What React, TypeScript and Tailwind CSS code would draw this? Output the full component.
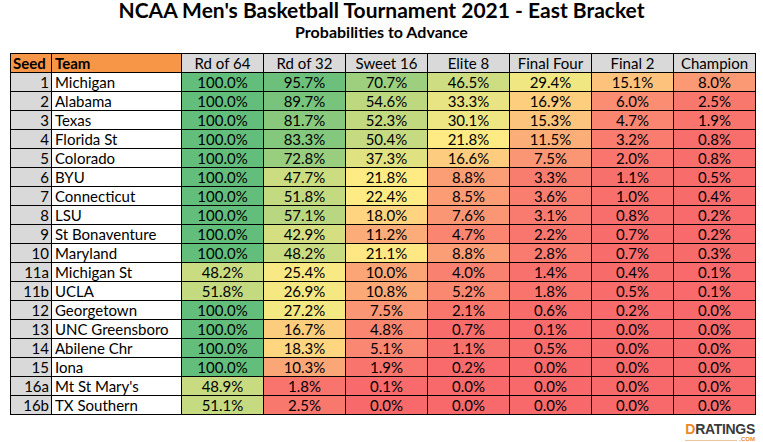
const columns = ["Rd of 64", "Rd of 32", "Sweet 16", "Elite 8", "Final Four", "Final 2", "Champion"];

const rows: [string, string, number[]][] = [
  ["1", "Michigan", [100.0, 95.7, 70.7, 46.5, 29.4, 15.1, 8.0]],
  ["2", "Alabama", [100.0, 89.7, 54.6, 33.3, 16.9, 6.0, 2.5]],
  ["3", "Texas", [100.0, 81.7, 52.3, 30.1, 15.3, 4.7, 1.9]],
  ["4", "Florida St", [100.0, 83.3, 50.4, 21.8, 11.5, 3.2, 0.8]],
  ["5", "Colorado", [100.0, 72.8, 37.3, 16.6, 7.5, 2.0, 0.8]],
  ["6", "BYU", [100.0, 47.7, 21.8, 8.8, 3.3, 1.1, 0.5]],
  ["7", "Connecticut", [100.0, 51.8, 22.4, 8.5, 3.6, 1.0, 0.4]],
  ["8", "LSU", [100.0, 57.1, 18.0, 7.6, 3.1, 0.8, 0.2]],
  ["9", "St Bonaventure", [100.0, 42.9, 11.2, 4.7, 2.2, 0.7, 0.2]],
  ["10", "Maryland", [100.0, 48.2, 21.1, 8.8, 2.8, 0.7, 0.3]],
  ["11a", "Michigan St", [48.2, 25.4, 10.0, 4.0, 1.4, 0.4, 0.1]],
  ["11b", "UCLA", [51.8, 26.9, 10.8, 5.2, 1.8, 0.5, 0.1]],
  ["12", "Georgetown", [100.0, 27.2, 7.5, 2.1, 0.6, 0.2, 0.0]],
  ["13", "UNC Greensboro", [100.0, 16.7, 4.8, 0.7, 0.1, 0.0, 0.0]],
  ["14", "Abilene Chr", [100.0, 18.3, 5.1, 1.1, 0.5, 0.0, 0.0]],
  ["15", "Iona", [100.0, 10.3, 1.9, 0.2, 0.0, 0.0, 0.0]],
  ["16a", "Mt St Mary's", [48.9, 1.8, 0.1, 0.0, 0.0, 0.0, 0.0]],
  ["16b", "TX Southern", [51.1, 2.5, 0.0, 0.0, 0.0, 0.0, 0.0]],
];

// Excel-style 3 colour scale: red -> yellow -> green
const RED = [248, 105, 107];
const YELLOW = [255, 235, 132];
const GREEN = [99, 190, 123];
const MID = 21.8;

function mix(a: number[], b: number[], t: number) {
  const c = a.map((v, i) => Math.round(v + (b[i] - v) * t));
  return `rgb(${c[0]}, ${c[1]}, ${c[2]})`;
}

function scaleColor(v: number) {
  if (v <= MID) return mix(RED, YELLOW, v / MID);
  return mix(YELLOW, GREEN, (v - MID) / (100 - MID));
}

const cell = "h-[19px] border-r border-b border-black flex items-center leading-none";

export default function App() {
  return (
    <div className="w-[763px] h-[442px] bg-white text-black font-['Lato',sans-serif] overflow-hidden">
      <div className="flex flex-col items-center">
        <h1 className="text-[21px] leading-[18px] font-bold pt-[1px] h-[18px]">
          NCAA Men's Basketball Tournament 2021 - East Bracket
        </h1>
        <h2 className="mt-[4px] text-[16px] leading-[20px] font-bold">Probabilities to Advance</h2>
      </div>

      <div className="ml-[10px] mt-[11px] w-[746px] border-l border-t border-black grid grid-cols-[41px_130px_repeat(7,82px)] text-[15px]">
        {/* Header */}
        <div className={`${cell} bg-[#f79646] font-bold px-[2px]`}>Seed</div>
        <div className={`${cell} bg-[#f79646] font-bold px-[3px]`}>Team</div>
        {columns.map((c) => (
          <div key={c} className={`${cell} bg-[#d9d9d9] justify-center`}>
            {c}
          </div>
        ))}

        {rows.map(([seed, team, vals]) => (
          <div key={seed} className="contents">
            <div className={`${cell} bg-[#d9d9d9] justify-end pr-[2px]`}>{seed}</div>
            <div className={`${cell} bg-white px-[3px]`}>{team}</div>
            {vals.map((v, i) => (
              <div key={i} className={`${cell} justify-center`} style={{ backgroundColor: scaleColor(v) }}>
                {v.toFixed(1)}%
              </div>
            ))}
          </div>
        ))}
      </div>

      {/* DRatings logo */}
      <div className="flex justify-end pr-[8px] mt-[8px]">
        <div className="flex flex-col items-end">
          <div className="text-[14px] leading-[12px] font-bold tracking-[-0.3px] font-['Liberation_Sans',sans-serif]">
            <span className="text-[#e8892b]">D</span>
            <span className="text-[#3a3a3a]">RATINGS</span>
          </div>
          <div className="flex items-center gap-[2px] w-full mt-[1px]">
            <div className="flex-1 h-px bg-[#e9c79a] mt-[3px]" />
            <span className="text-[6px] leading-[6px] font-bold text-[#e8892b] font-['Liberation_Sans',sans-serif]">.COM</span>
          </div>
        </div>
      </div>
    </div>
  );
}
